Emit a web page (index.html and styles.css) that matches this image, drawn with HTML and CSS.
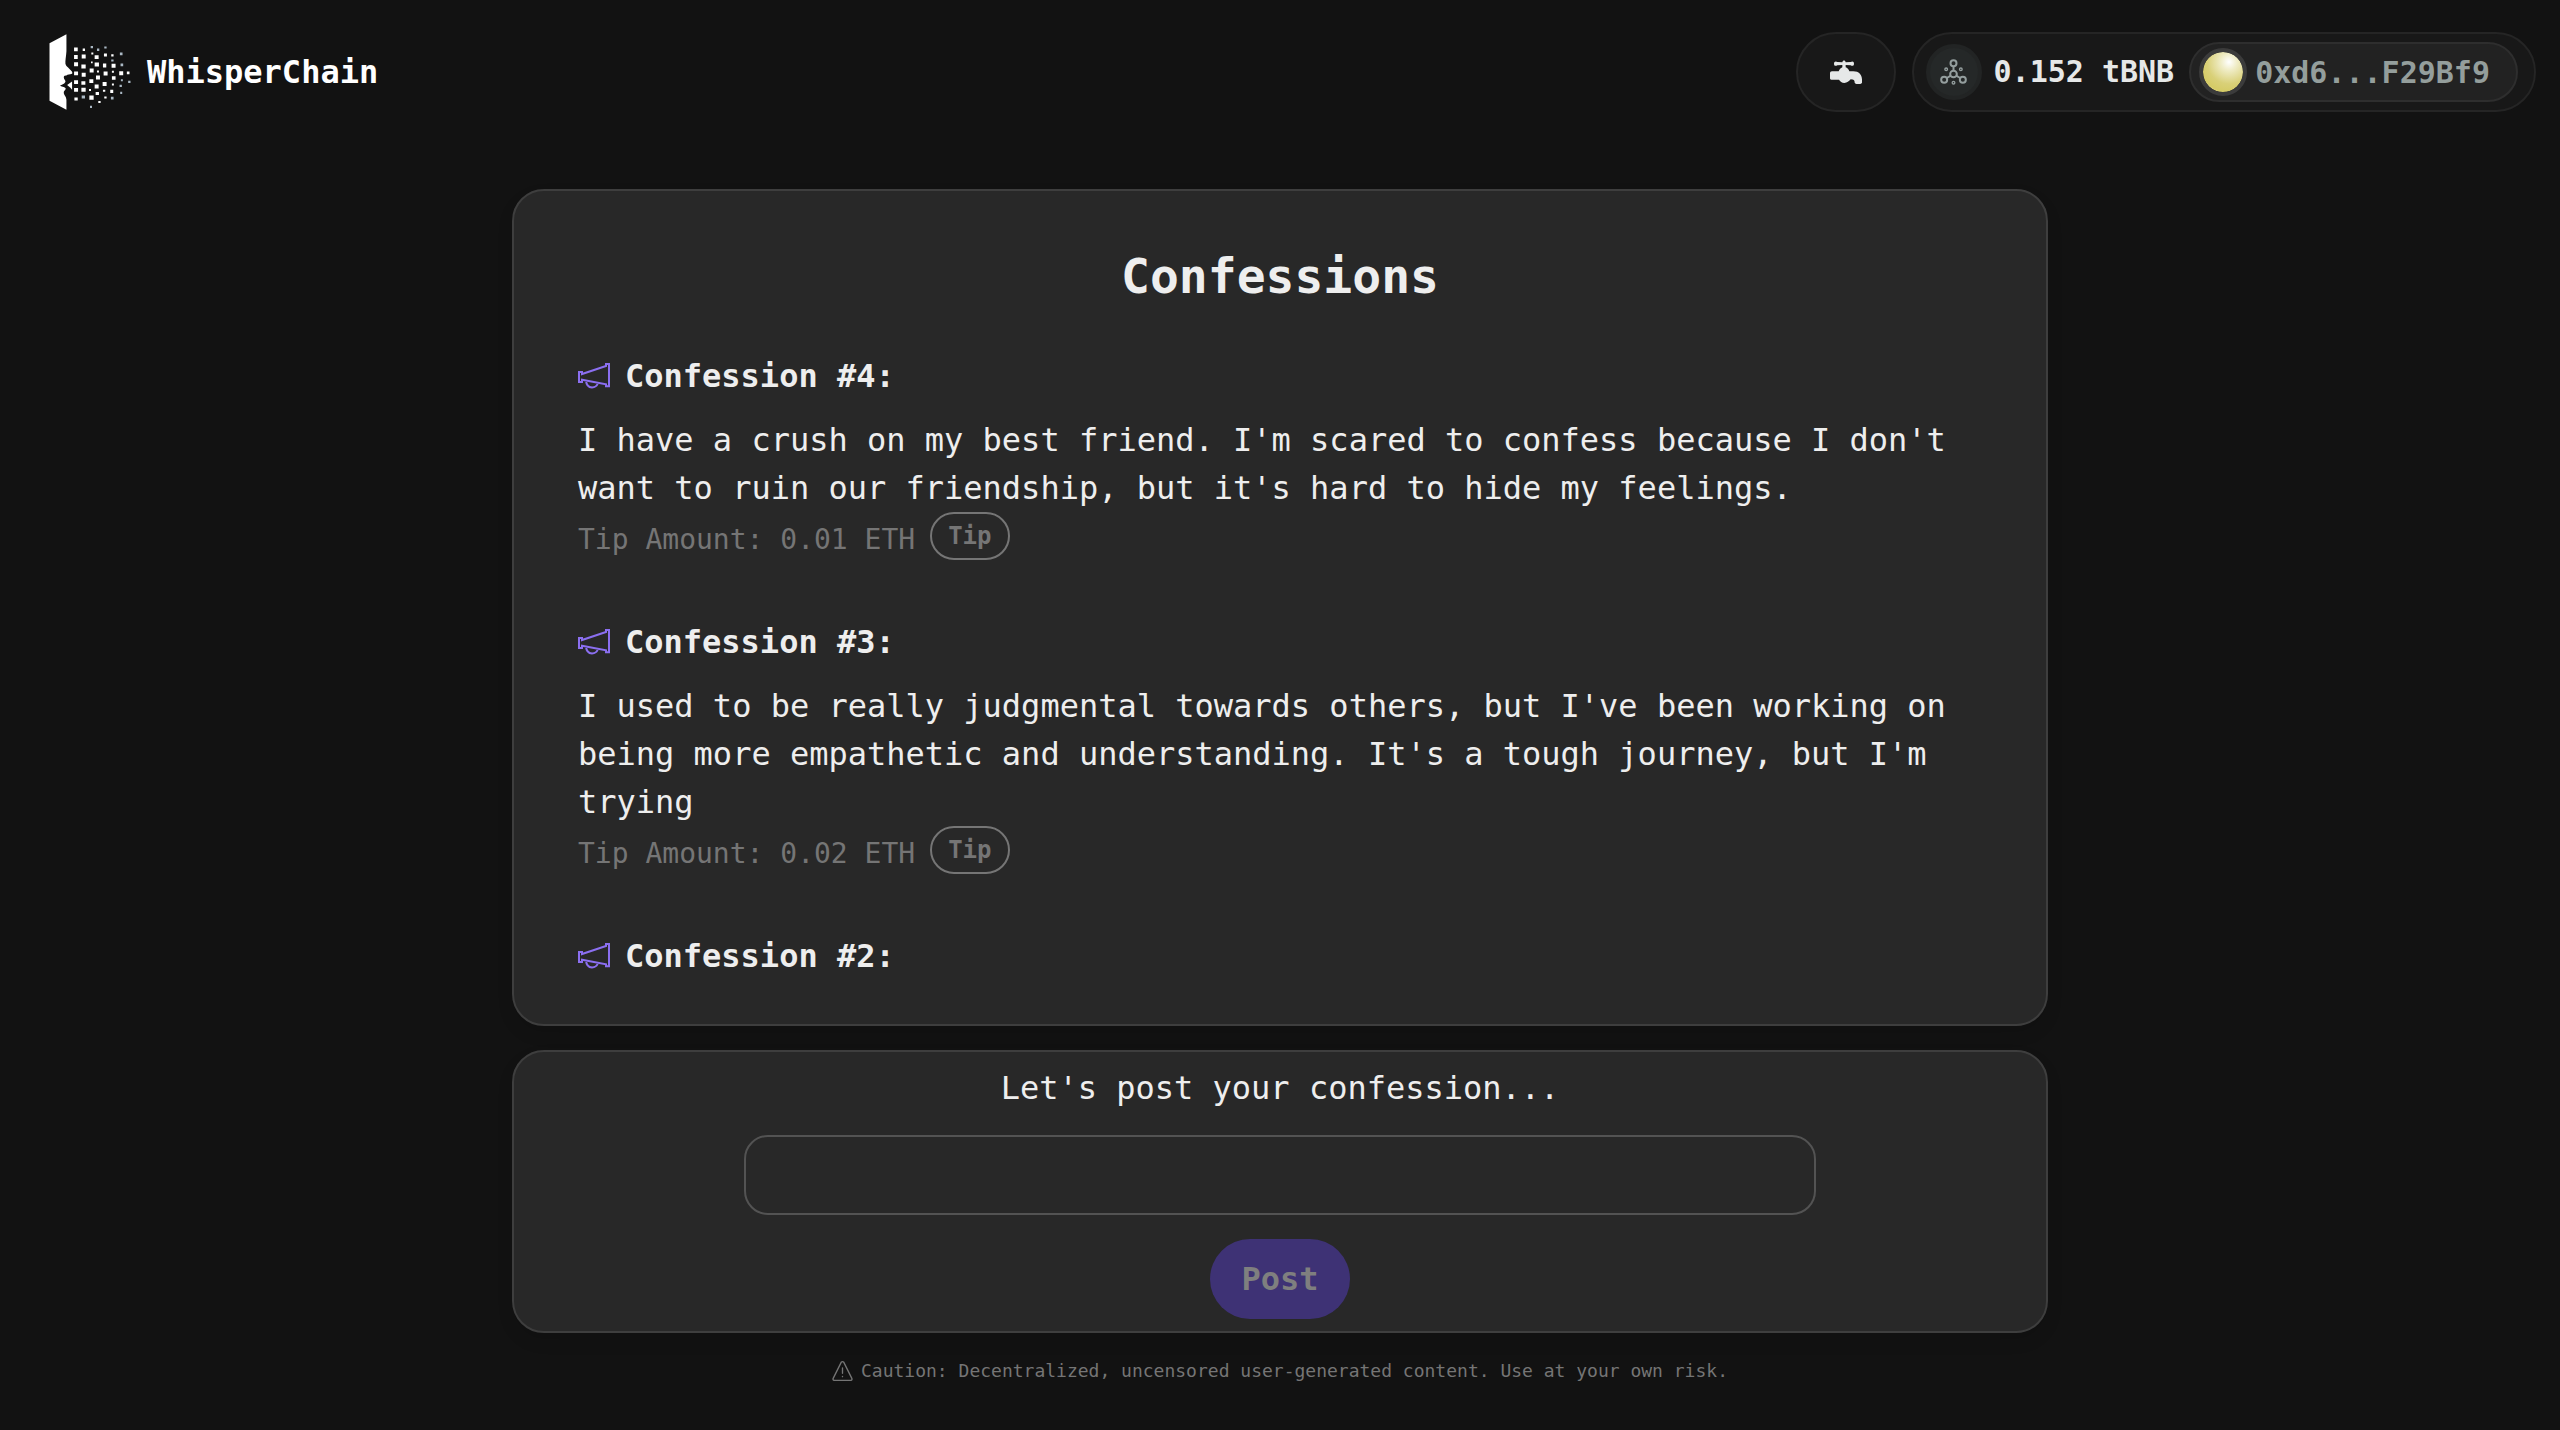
FILE: index.html
```html
<!DOCTYPE html>
<html lang="en">
<head>
<meta charset="utf-8">
<meta name="viewport" content="width=device-width, initial-scale=1">
<title>WhisperChain</title>
<link rel="stylesheet" href="styles.css">
</head>
<body>
<svg width="0" height="0" class="sprite" aria-hidden="true">
  <symbol id="horn" viewBox="0 0 96 78">
    <path d="M3 27H12V33L84 9V3H93V70H84V64L12 50V57H3ZM24 53C25 66 31 73 42 73.500C52 73.500 57 68 60 60" fill="none" stroke="currentColor" stroke-width="6"/>
  </symbol>
</svg>
<header class="header">
  <a class="brand" href="#">
    <svg class="brand-mark" viewBox="54 40 255 235" aria-hidden="true">
      <path fill="#fff" d="M58 71L109 44V95C108 112 105 122 106 133C109 143 118 146 126 157L127 161C124 165 117 164 112 166C107 170 102 167 101 173C101 180 107 181 106 187C104 192 101 194 90 198C92 202 104 202 106 206C109 210 102 213 101 219C101 227 108 229 109 241V271L58 244Z"/>
      <path fill="#fff" d="M111 197L126 186V211L121 205Z"/>
      <path fill="#fff" d="M132 84h11v11h-11zM132 106h11v12h-11zM132 128h12v12h-12zM132 156h12v11h-12zM132 182h12v12h-12zM132 206h12v11h-12zM133 234h10v9h-10zM158 87h7v7h-7zM155 105h12v12h-12zM154 135h13v12h-13zM155 160h12v12h-12zM154 185h12v11h-12zM154 205h13v12h-13zM184 99h6v6h-6zM194 107h12v11h-12zM183 126h5v5h-5zM194 129h13v12h-13zM179 147h12v12h-12zM201 153h6v6h-6zM198 168h12v12h-12zM178 179h12v12h-12zM194 195h12v12h-12zM177 209h6v6h-6zM197 218h10v9h-10zM178 228h13v13h-13zM205 245h7v6h-7zM222 102h9v9h-9zM219 132h10v12h-10zM221 156h12v12h-12zM218 188h12v12h-12zM219 211h7v6h-7zM223 231h7v6h-7zM244 104h7v7h-7zM245 133h12v12h-12zM246 154h6v6h-6zM246 170h11v11h-11zM246 192h6v6h-6zM241 211h9v10h-9zM268 155h12v12h-12zM291 156h8v8h-8z"/>
      <path fill="#aab8c4" d="M182 79h7v7h-7zM201 87h7v7h-7zM223 81h7v6h-7zM244 120h7v6h-7zM270 99h8v8h-8zM272 132h8v8h-8zM273 179h6v6h-6zM269 196h7v7h-7zM271 217h6v7h-6zM295 184h7v7h-7zM243 232h8v8h-8zM155 228h10v9h-10zM180 259h6v7h-6z"/>
    </svg>
    <span>WhisperChain</span>
  </a>
  <div class="wallet">
    <button class="pill faucet" type="button" aria-label="Faucet">
      <svg viewBox="0 0 96 72" aria-hidden="true">
        <path fill="currentColor" d="M12 11C12 4 18 3 22 6L37 7C38 0 46 0 47 7L62 6C67 3 72 4 72 11C72 18 66 19 62 16L47 15V22C52 24 56 27 58 34H70C87 34 95 44 96 58V68C94 73 77 74 74 68C74 61 71 58 62 58C56 65 52 68 43 69C35 69 31 64 27 59H4C1 59 0 57 0 54V40C0 36 2 34 6 34H26C28 28 32 24 37 22V15L22 16C17 19 12 18 12 11Z"/>
      </svg>
    </button>
    <div class="pill account">
      <span class="network">
        <svg viewBox="0 0 80 78" aria-hidden="true">
          <g fill="none" stroke="currentColor" stroke-width="6">
            <circle cx="40" cy="13" r="9"/><circle cx="40" cy="45" r="10"/><circle cx="12" cy="62" r="9"/><circle cx="68" cy="62" r="9"/>
            <path d="M40 22V35M32 50L20 57M48 50L60 57"/>
          </g>
          <g fill="none" stroke="currentColor" stroke-width="4"><circle cx="18" cy="31" r="4"/><circle cx="62" cy="31" r="4"/><circle cx="40" cy="71" r="4"/></g>
        </svg>
      </span>
      <span class="balance">0.152 tBNB</span>
      <button class="address" type="button"><span class="avatar"></span>0xd6...F29Bf9</button>
    </div>
  </div>
</header>
<main class="main">
  <section class="card feed">
    <h1 class="feed-title">Confessions</h1>
    <article class="item">
      <h2 class="item-title"><svg class="horn" aria-hidden="true"><use href="#horn"/></svg>Confession #4:</h2>
      <p class="item-text">I have a crush on my best friend. I'm scared to confess because I don't want to ruin our friendship, but it's hard to hide my feelings.</p>
      <div class="tip-row"><span class="tip-amount">Tip Amount: 0.01 ETH</span><button class="tip" type="button">Tip</button></div>
    </article>
    <article class="item">
      <h2 class="item-title"><svg class="horn" aria-hidden="true"><use href="#horn"/></svg>Confession #3:</h2>
      <p class="item-text">I used to be really judgmental towards others, but I've been working on being more empathetic and understanding. It's a tough journey, but I'm trying</p>
      <div class="tip-row"><span class="tip-amount">Tip Amount: 0.02 ETH</span><button class="tip" type="button">Tip</button></div>
    </article>
    <article class="item">
      <h2 class="item-title"><svg class="horn" aria-hidden="true"><use href="#horn"/></svg>Confession #2:</h2>
    </article>
  </section>
  <form class="card composer">
    <label class="composer-label" for="confession">Let's post your confession...</label>
    <input class="composer-input" id="confession" type="text">
    <button class="post" type="submit" disabled>Post</button>
  </form>
</main>
<footer class="footer">
  <svg class="warning" viewBox="0 0 62 60" aria-hidden="true">
    <g fill="none" stroke="currentColor" stroke-width="4" stroke-linecap="round" stroke-linejoin="round">
      <path d="M27 4Q31 0 35 4L59 52Q61 57 56 58H6Q1 57 3 52Z"/><path d="M31 21V37M31 46V47"/>
    </g>
  </svg>
  <span>Caution: Decentralized, uncensored user-generated content. Use at your own risk.</span>
</footer>
</body>
</html>
```
FILE: styles.css
```css
* {
  box-sizing: border-box;
}

body {
  display: flex;
  flex-direction: column;
  height: 100vh;
  margin: 0;
  background: #121212;
  color: #eeeeee;
  font-family: "DejaVu Sans Mono", monospace;
  font-size: 32px;
  line-height: 48px;
}

button,
input {
  margin: 0;
  font-family: inherit;
}

h1,
h2,
p {
  margin: 0;
}

svg {
  display: block;
  flex: none;
}

.sprite {
  position: absolute;
}

/* Header */
.header {
  display: flex;
  align-items: center;
  justify-content: space-between;
  padding: 32px 24px 0 48px;
}

.brand {
  display: flex;
  align-items: center;
  gap: 14px;
  color: #ffffff;
  font-weight: 700;
  text-decoration: none;
}

.brand-mark {
  width: 85px;
  height: 78px;
}

.wallet {
  display: flex;
  gap: 16px;
  font-size: 30px;
}

.pill {
  display: flex;
  align-items: center;
  height: 80px;
  border: 2px solid #252525;
  border-radius: 40px;
  background: #181818;
  color: #e6e8e8;
}

.faucet {
  justify-content: center;
  width: 100px;
  padding: 0;
}

.faucet svg {
  width: 32px;
  height: 24px;
}

.account {
  padding: 0 16px 0 12px;
}

.network {
  display: flex;
  align-items: center;
  justify-content: center;
  width: 56px;
  height: 56px;
  border: 4px solid #222424;
  border-radius: 50%;
  background: #252828;
  color: #949e9e;
}

.network svg {
  width: 27px;
  height: 26px;
}

.balance {
  margin: 0 15px 0 12px;
  font-weight: 700;
}

.address {
  display: flex;
  align-items: center;
  gap: 8px;
  height: 60px;
  padding: 0 26px 0 8px;
  border: 2px solid #2e2e2e;
  border-radius: 30px;
  background: #222222;
  color: #949e9c;
  font-size: 30px;
  font-weight: 700;
}

.avatar {
  width: 48px;
  height: 48px;
  border: 4px solid #3b3b3b;
  border-radius: 50%;
  background: radial-gradient(circle at 65% 25%, #ffffff 0%, #f0edc8 20%, #d9d078 55%, #d5cb66 75%, #eeeabf 100%) padding-box;
}

/* Cards */
.main {
  display: flex;
  flex: 1;
  flex-direction: column;
  gap: 24px;
  width: 60%;
  min-height: 0;
  margin: 77px auto 0;
}

.card {
  border: 2px solid #3e3e3e;
  border-radius: 32px;
  background: #282828;
  box-shadow: 0 8px 16px rgba(0, 0, 0, 0.1);
}

.feed {
  display: flex;
  flex: 1;
  flex-direction: column;
  gap: 58px;
  min-height: 0;
  padding: 53px 64px 0;
  overflow: hidden;
}

.feed-title {
  font-size: 48px;
  font-weight: 700;
  line-height: 64px;
  margin-bottom: -14px;
  text-align: center;
}

.item-title {
  display: flex;
  align-items: center;
  gap: 15px;
  margin-bottom: 16px;
  font-size: 32px;
  font-weight: 700;
}

.horn {
  width: 32px;
  height: 26px;
  color: #8b6ff0;
}

.tip-row {
  display: flex;
  align-items: flex-end;
  gap: 15px;
}

.tip-amount {
  color: #757575;
  font-size: 28px;
  line-height: 40px;
}

.tip {
  height: 48px;
  padding: 0 16px;
  border: 2px solid #757575;
  border-radius: 24px;
  background: transparent;
  color: #757575;
  font-size: 24px;
  font-weight: 700;
}

/* Composer */
.composer {
  display: flex;
  flex-direction: column;
  align-items: center;
  padding: 12px 64px;
}

.composer-input {
  width: 100%;
  max-width: 1072px;
  height: 80px;
  margin: 23px 0 24px;
  padding: 0 24px;
  border: 2px solid #535353;
  border-radius: 24px;
  background: transparent;
  color: #eeeeee;
  font-size: 32px;
}

.post {
  height: 80px;
  padding: 0 31px;
  border: 0;
  border-radius: 40px;
  background: #3e3275;
  color: #7f7f7f;
  font-size: 32px;
  font-weight: 700;
}

/* Footer */
.footer {
  display: flex;
  align-items: center;
  justify-content: center;
  gap: 8px;
  padding: 22px 0 43px;
  color: #757575;
  font-size: 18px;
  line-height: 32px;
}

.warning {
  width: 21px;
  height: 20px;
}
```
